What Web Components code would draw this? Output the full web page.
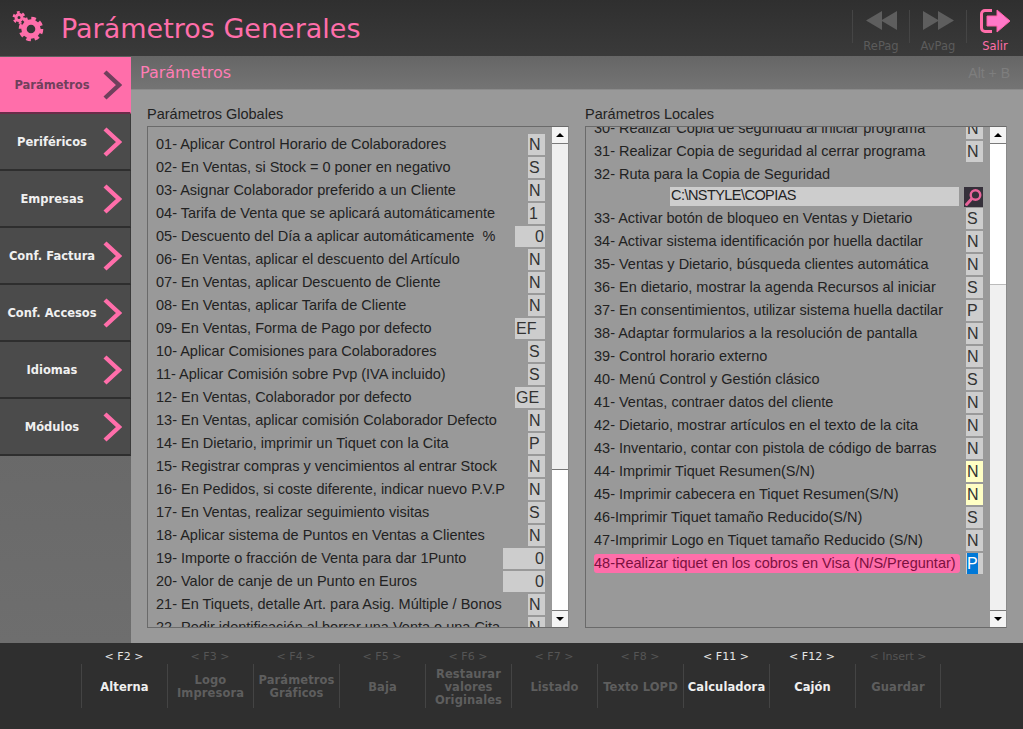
<!DOCTYPE html>
<html lang="es">
<head>
<meta charset="utf-8">
<title>Parámetros Generales</title>
<style>
  html, body { margin: 0; height: 100%; background: #999; }
  body { font-family: "Liberation Sans", Arial, sans-serif; overflow: hidden; }
</style>
</head>
<body>
<app-shell>
  <app-header slot="header" title="Parámetros Generales">
    <tool-button label="RePag" icon="prev" disabled></tool-button>
    <tool-button label="AvPag" icon="next" disabled></tool-button>
    <tool-button label="Salir" icon="exit"></tool-button>
  </app-header>

  <side-nav slot="nav">
    <nav-item active>Parámetros</nav-item>
    <nav-item>Periféricos</nav-item>
    <nav-item>Empresas</nav-item>
    <nav-item>Conf. Factura</nav-item>
    <nav-item>Conf. Accesos</nav-item>
    <nav-item>Idiomas</nav-item>
    <nav-item>Módulos</nav-item>
  </side-nav>

  <section-panel slot="main" heading="Parámetros" shortcut="Alt + B">
    <param-list heading="Parámetros Globales" thumb="end">
      <param-row value="N">01- Aplicar Control Horario de Colaboradores</param-row>
      <param-row value="S">02- En Ventas, si Stock = 0 poner en negativo</param-row>
      <param-row value="N">03- Asignar Colaborador preferido a un Cliente</param-row>
      <param-row value="1">04- Tarifa de Venta que se aplicará automáticamente</param-row>
      <param-row value="0" size="m" align="right">05- Descuento del Día a aplicar automáticamente &nbsp;%</param-row>
      <param-row value="N">06- En Ventas, aplicar el descuento del Artículo</param-row>
      <param-row value="N">07- En Ventas, aplicar Descuento de Cliente</param-row>
      <param-row value="N">08- En Ventas, aplicar Tarifa de Cliente</param-row>
      <param-row value="EF" size="m">09- En Ventas, Forma de Pago por defecto</param-row>
      <param-row value="S">10- Aplicar Comisiones para Colaboradores</param-row>
      <param-row value="S">11- Aplicar Comisión sobre Pvp (IVA incluido)</param-row>
      <param-row value="GE" size="m">12- En Ventas, Colaborador por defecto</param-row>
      <param-row value="N">13- En Ventas, aplicar comisión Colaborador Defecto</param-row>
      <param-row value="P">14- En Dietario, imprimir un Tiquet con la Cita</param-row>
      <param-row value="N">15- Registrar compras y vencimientos al entrar Stock</param-row>
      <param-row value="N">16- En Pedidos, si coste diferente, indicar nuevo P.V.P</param-row>
      <param-row value="S">17- En Ventas, realizar seguimiento visitas</param-row>
      <param-row value="N">18- Aplicar sistema de Puntos en Ventas a Clientes</param-row>
      <param-row value="0" size="l" align="right">19- Importe o fracción de Venta para dar 1Punto</param-row>
      <param-row value="0" size="l" align="right">20- Valor de canje de un Punto en Euros</param-row>
      <param-row value="N">21- En Tiquets, detalle Art. para Asig. Múltiple / Bonos</param-row>
      <param-row value="N">22- Pedir identificación al borrar una Venta o una Cita</param-row>
    </param-list>

    <param-list heading="Parámetros Locales" thumb="start" scrolled>
      <param-row value="N">30- Realizar Copia de seguridad al iniciar programa</param-row>
      <param-row value="N">31- Realizar Copia de seguridad al cerrar programa</param-row>
      <param-row>32- Ruta para la Copia de Seguridad</param-row>
      <path-row value="C:\NSTYLE\COPIAS"></path-row>
      <param-row value="S">33- Activar botón de bloqueo en Ventas y Dietario</param-row>
      <param-row value="N">34- Activar sistema identificación por huella dactilar</param-row>
      <param-row value="N">35- Ventas y Dietario, búsqueda clientes automática</param-row>
      <param-row value="S">36- En dietario, mostrar la agenda Recursos al iniciar</param-row>
      <param-row value="P">37- En consentimientos, utilizar sistema huella dactilar</param-row>
      <param-row value="N">38- Adaptar formularios a la resolución de pantalla</param-row>
      <param-row value="N">39- Control horario externo</param-row>
      <param-row value="S">40- Menú Control y Gestión clásico</param-row>
      <param-row value="N">41- Ventas, contraer datos del cliente</param-row>
      <param-row value="N">42- Dietario, mostrar artículos en el texto de la cita</param-row>
      <param-row value="N">43- Inventario, contar con pistola de código de barras</param-row>
      <param-row value="N" tone="note">44- Imprimir Tiquet Resumen(S/N)</param-row>
      <param-row value="N" tone="note">45- Imprimir cabecera en Tiquet Resumen(S/N)</param-row>
      <param-row value="S">46-Imprimir Tiquet tamaño Reducido(S/N)</param-row>
      <param-row value="N">47-Imprimir Logo en Tiquet tamaño Reducido (S/N)</param-row>
      <param-row value="P" focused>48-Realizar tiquet en los cobros en Visa (N/S/Preguntar)</param-row>
    </param-list>
  </section-panel>

  <fn-bar slot="footer">
    <fn-key hint="&lt; F2 &gt;" on>Alterna</fn-key>
    <fn-key hint="&lt; F3 &gt;">Logo<br>Impresora</fn-key>
    <fn-key hint="&lt; F4 &gt;">Parámetros<br>Gráficos</fn-key>
    <fn-key hint="&lt; F5 &gt;">Baja</fn-key>
    <fn-key hint="&lt; F6 &gt;">Restaurar<br>valores<br>Originales</fn-key>
    <fn-key hint="&lt; F7 &gt;">Listado</fn-key>
    <fn-key hint="&lt; F8 &gt;">Texto LOPD</fn-key>
    <fn-key hint="&lt; F11 &gt;" on>Calculadora</fn-key>
    <fn-key hint="&lt; F12 &gt;" on>Cajón</fn-key>
    <fn-key hint="&lt; Insert &gt;" last>Guardar</fn-key>
  </fn-bar>
</app-shell>

<script>
const PINK = '#ff6eaa';

// Small helper, every element below does the same thing in its constructor
class Base extends HTMLElement {
  render(html) {
    if (!this.shadowRoot) this.attachShadow({ mode: 'open' });
    this.shadowRoot.innerHTML = html;
  }
}

class AppShell extends Base {
  connectedCallback() {
    this.render(`
      <style>
        :host {
          display: grid;
          grid-template-columns: 131px 1fr;
          grid-template-rows: 56px 587px 86px;
          height: 729px;
        }
        .top, .bottom { grid-column: 1 / 3; display: block; }
      </style>
      <div class="top"><slot name="header"></slot></div>
      <slot name="nav"></slot>
      <slot name="main"></slot>
      <div class="bottom"><slot name="footer"></slot></div>
    `);
  }
}

class AppHeader extends Base {
  connectedCallback() {
    this.render(`
      <style>
        :host {
          display: flex;
          align-items: flex-start;
          height: 56px;
          background: linear-gradient(#2f2f2f, #3a3a3a);
        }
        svg { width: 32px; height: 36px; margin: 10px 0 0 12px; flex: none; }
        h1 {
          flex: 1;
          margin: 12px 0 0 17px;
          font: 400 27px/34px "DejaVu Sans", sans-serif;
          color: ${PINK};
        }
        .tools { display: flex; }
      </style>
      <svg viewBox="0 0 32 36" fill="none" stroke="${PINK}">
        <circle cx="19" cy="19" r="7" stroke-width="5.4"/>
        <circle cx="19" cy="19" r="10.6" stroke-width="3.4" stroke-dasharray="4.6 3.72"/>
        <circle cx="7" cy="7.5" r="3" stroke-width="3"/>
        <circle cx="7" cy="7.5" r="5.2" stroke-width="2.4" stroke-dasharray="2.8 2.65"/>
      </svg>
      <h1>${this.getAttribute('title')}</h1>
      <div class="tools"><slot></slot></div>
    `);
  }
}

const TOOL_ICONS = {
  prev: `<svg viewBox="0 0 31 19" fill="#5e5e5e"><path d="M16 0v19L0 9.500zM31 0v19L15 9.500z"/></svg>`,
  next: `<svg viewBox="0 0 31 19" fill="#5e5e5e"><path d="M0 0v19l16-9.500zM15 0v19l16-9.500z"/></svg>`,
  exit: `<svg viewBox="0 0 31 24" style="height:24px;margin-top:-2px">
      <path d="M12 1.500H5A3.500 3.500 0 0 0 1.500 5v14A3.500 3.500 0 0 0 5 22.500h7" fill="none" stroke="${PINK}" stroke-width="3"/>
      <path d="M7 7h10V1l13 11-13 11v-6H7z" fill="#ff78c8" stroke="#ff5fa5"/>
    </svg>`
};

class ToolButton extends Base {
  connectedCallback() {
    const off = this.hasAttribute('disabled');
    this.render(`
      <style>
        :host { display: block; width: 57px; text-align: center; margin-top: 10px; }
        .icon {
          height: 33px;
          box-sizing: border-box;
          padding-top: 1px;
          border-left: 1px solid #454545;
        }
        svg { width: 31px; height: 19px; display: inline-block; }
        span {
          display: block;
          margin-top: -4px;
          padding-left: 1px;
          font: 11.500px/14px "DejaVu Sans", sans-serif;
          color: ${off ? '#5c5c5c' : PINK};
        }
      </style>
      <div class="icon">${TOOL_ICONS[this.getAttribute('icon')]}</div>
      <span>${this.getAttribute('label')}</span>
    `);
  }
}

class SideNav extends Base {
  connectedCallback() {
    this.render(`
      <style>
        :host {
          display: flex;
          flex-direction: column;
          padding-top: 1px;
          background: linear-gradient(#5f5f5f, #6e6e6e);
        }
      </style>
      <slot></slot>
    `);
  }
}

class NavItem extends Base {
  connectedCallback() {
    const on = this.hasAttribute('active');
    const ink = on ? '#70405c' : '#f0f0f0';
    this.render(`
      <style>
        :host {
          display: flex;
          align-items: center;
          box-sizing: border-box;
          height: 57px;
          padding-right: 8px;
          background: ${on ? '#ff6eaa' : '#4b4b4b'};
          border-bottom: 2px solid ${on ? '#6a2c48' : '#2e2e2e'};
          border-right: 1px solid ${on ? '#ff6eaa' : '#3a3a3a'};
        }
        span {
          flex: 1;
          padding: 1px 0 0 1px;
          text-align: center;
          font: 700 11.500px/14px "DejaVu Sans", sans-serif;
          color: ${ink};
        }
        svg { width: 19px; height: 30px; flex: none; }
      </style>
      <span><slot></slot></span>
      <svg viewBox="0 0 19 30" fill="none" stroke="${on ? '#70405c' : PINK}" stroke-width="4.400">
        <path d="M2 2l14 13L2 28"/>
      </svg>
    `);
  }
}

class SectionPanel extends Base {
  connectedCallback() {
    this.render(`
      <style>
        :host { display: flex; flex-direction: column; background: #999; min-width: 0; }
        header {
          display: flex;
          justify-content: space-between;
          align-items: center;
          box-sizing: border-box;
          height: 34px;
          padding: 0 13px 0 9px;
          background: linear-gradient(#666, #747474);
          border-bottom: 1px solid #8b8b8b;
        }
        h2 { margin: 0; font: 400 16px/20px "DejaVu Sans", sans-serif; color: #ff7db5; }
        small { font: 14px/20px "Liberation Sans", sans-serif; color: #7e7e7e; }
        .cols {
          display: grid;
          grid-template-columns: 422px 422px;
          gap: 16px;
          padding: 15px 16px 15px;
        }
      </style>
      <header><h2>${this.getAttribute('heading')}</h2><small>${this.getAttribute('shortcut')}</small></header>
      <div class="cols"><slot></slot></div>
    `);
  }
}

class ParamList extends Base {
  connectedCallback() {
    const atEnd = this.getAttribute('thumb') === 'end';
    this.render(`
      <style>
        :host { display: block; }
        h3 { margin: 1px 0 3px 0; font: 400 14.500px/17px "Liberation Sans", sans-serif; color: #222; }
        .box {
          display: flex;
          box-sizing: border-box;
          height: 502px;
          border: 1px solid #6a6a6a;
          border-right-color: #8a8a8a;
        }
        .body { flex: 1; overflow: hidden; min-width: 0; padding-left: 8px; }
        .rows { margin-top: ${this.hasAttribute('scrolled') ? '-10px' : '6px'}; }
        ::slotted(*) { margin-right: 7px; }
      </style>
      <h3>${this.getAttribute('heading')}</h3>
      <div class="box">
        <div class="body"><div class="rows"><slot></slot></div></div>
        <scroll-rail ${atEnd ? 'end' : ''}></scroll-rail>
      </div>
    `);
  }
}

class ScrollRail extends Base {
  connectedCallback() {
    this.render(`
      <style>
        :host {
          display: flex;
          flex-direction: column;
          width: 16px;
          flex: none;
          background: #f0f0f0;
        }
        .btn {
          display: flex;
          align-items: center;
          justify-content: center;
          height: 16px;
          flex: none;
          background: #f4f4f4;
          border-bottom: 1px solid #7a7a7a;
        }
        .btn.down { border-bottom: 0; border-top: 1px solid #7a7a7a; }
        .arrow { width: 0; height: 0; border: 4px solid transparent; border-top: 0; border-bottom: 4px solid #000; }
        .down .arrow { border-bottom: 0; border-top: 4px solid #000; }
        .track { flex: 1; display: flex; flex-direction: column; ${this.hasAttribute('end') ? 'justify-content: flex-end;' : ''} }
        .thumb { height: 140px; background: #fff; ${this.hasAttribute('end') ? 'border-top: 1px solid #777;' : 'border-bottom: 1px solid #bbb;'} }
      </style>
      <div class="btn"><div class="arrow"></div></div>
      <div class="track"><div class="thumb"></div></div>
      <div class="btn down"><div class="arrow"></div></div>
    `);
  }
}

class ParamRow extends Base {
  connectedCallback() {
    const value = this.getAttribute('value');
    const size = { m: '30px', l: '42px' }[this.getAttribute('size')] || '17px';
    const focused = this.hasAttribute('focused');
    const bg = this.getAttribute('tone') === 'note' ? '#ffffc4' : '#cdcdcd';
    let box = '';
    if (value !== null) {
      const inner = focused ? `<b>${value}</b>` : value;
      box = `<div class="val">${inner}</div>`;
    }
    this.render(`
      <style>
        :host {
          display: flex;
          justify-content: space-between;
          align-items: center;
          height: 23px;
          white-space: nowrap;
          font: 14.500px/19px "Liberation Sans", sans-serif;
          color: #222;
        }
        .label { ${focused ? 'background:#ff6eaa;color:#7c1040;border-radius:3px;margin-right:6px;flex:1;' : ''} }
        .val {
          box-sizing: border-box;
          width: ${size};
          height: 21px;
          flex: none;
          padding: 0 1px;
          background: ${bg};
          font: 16px/21px "Liberation Sans", sans-serif;
          color: #333;
          text-align: ${this.getAttribute('align') === 'right' ? 'right' : 'left'};
        }
        b { display: inline-block; font-weight: 400; width: 11px; height: 21px; background: #0078d7; color: #fff; }
      </style>
      <span class="label"><slot></slot></span>
      ${box}
    `);
  }
}

class PathRow extends Base {
  connectedCallback() {
    this.render(`
      <style>
        :host {
          display: flex;
          align-items: center;
          gap: 5px;
          height: 21px;
          padding-left: 76px;
        }
        .path {
          flex: 1;
          height: 19px;
          padding-left: 1px;
          background: #cdcdcd;
          font: 14.500px/17px "Liberation Sans", sans-serif;
          letter-spacing: -.55px;
          color: #222;
        }
        .go { width: 19px; height: 20px; background: #35303a; display: flex; align-items: center; justify-content: center; }
        svg { width: 19px; height: 20px; }
      </style>
      <div class="path">${this.getAttribute('value')}</div>
      <div class="go">
        <svg viewBox="0 0 19 20" fill="none" stroke="#e8649a">
          <circle cx="11.500" cy="8" r="4.800" stroke-width="2.400"/>
          <path d="M7.500 12L2.500 17.500" stroke-width="3" stroke-linecap="round"/>
        </svg>
      </div>
    `);
  }
}

class FnBar extends Base {
  connectedCallback() {
    this.render(`
      <style>
        :host {
          display: flex;
          box-sizing: border-box;
          height: 86px;
          padding: 7px 0 0 81px;
          background: #2f2f2f;
        }
      </style>
      <slot></slot>
    `);
  }
}

class FnKey extends Base {
  connectedCallback() {
    const on = this.hasAttribute('on');
    this.render(`
      <style>
        :host { display: block; width: 86px; text-align: center; }
        .hint { font: 11px/14px "DejaVu Sans", sans-serif; color: ${on ? '#e6e6e6' : '#555'}; }
        .name {
          display: flex;
          align-items: center;
          justify-content: center;
          box-sizing: border-box;
          height: 44px;
          padding-top: 2px;
          border-left: 1px solid #444;
          ${this.hasAttribute('last') ? 'border-right: 1px solid #444; width: 86px;' : ''}
          font: 700 11.500px/13px "DejaVu Sans", sans-serif;
          letter-spacing: .1px;
          color: ${on ? '#efefef' : '#5e5e5e'};
        }
      </style>
      <div class="hint">${this.getAttribute('hint').replace('<', '&lt;').replace('>', '&gt;')}</div>
      <div class="name"><span><slot></slot></span></div>
    `);
  }
}

customElements.define('app-shell', AppShell);
customElements.define('app-header', AppHeader);
customElements.define('tool-button', ToolButton);
customElements.define('side-nav', SideNav);
customElements.define('nav-item', NavItem);
customElements.define('section-panel', SectionPanel);
customElements.define('param-list', ParamList);
customElements.define('scroll-rail', ScrollRail);
customElements.define('param-row', ParamRow);
customElements.define('path-row', PathRow);
customElements.define('fn-bar', FnBar);
customElements.define('fn-key', FnKey);
</script>
</body>
</html>
